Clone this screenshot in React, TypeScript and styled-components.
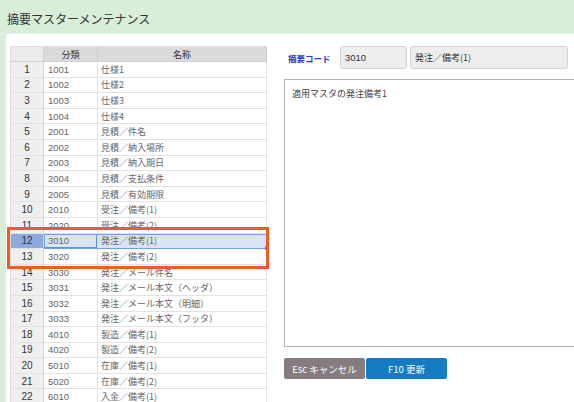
import styled, { createGlobalStyle } from "styled-components";

const GlobalStyle = createGlobalStyle`
    html, body {
        margin: 0;
        padding: 0;
        background: #d9eed9;
        font-family: "Noto Sans CJK JP", "Noto Sans", sans-serif;
        color: #333;
    }
`;

const rows: [number, string, string][] = [
    [1, "1001", "仕様1"],
    [2, "1002", "仕様2"],
    [3, "1003", "仕様3"],
    [4, "1004", "仕様4"],
    [5, "2001", "見積／件名"],
    [6, "2002", "見積／納入場所"],
    [7, "2003", "見積／納入期日"],
    [8, "2004", "見積／支払条件"],
    [9, "2005", "見積／有効期限"],
    [10, "2010", "受注／備考(1)"],
    [11, "2020", "受注／備考(2)"],
    [12, "3010", "発注／備考(1)"],
    [13, "3020", "発注／備考(2)"],
    [14, "3030", "発注／メール件名"],
    [15, "3031", "発注／メール本文（ヘッダ）"],
    [16, "3032", "発注／メール本文（明細）"],
    [17, "3033", "発注／メール本文（フッタ）"],
    [18, "4010", "製造／備考(1)"],
    [19, "4020", "製造／備考(2)"],
    [20, "5010", "在庫／備考(1)"],
    [21, "5020", "在庫／備考(2)"],
    [22, "6010", "入金／備考(1)"],
];

const selectedNo = 12;

const App = () => {
    return (
        <Page>
            <GlobalStyle />
            <Header>摘要マスターメンテナンス</Header>
            <Panel>
                <GridWrap>
                    <HeadRow>
                        <NoHead />
                        <CodeHead>分類</CodeHead>
                        <NameHead>名称</NameHead>
                    </HeadRow>
                    {rows.map(([no, code, name]) => {
                        const selected = no === selectedNo;
                        return (
                            <Row key={no} $selected={selected}>
                                <NoCell $selected={selected}>{no}</NoCell>
                                <CodeCell $selected={selected} $active={selected}>
                                    {code}
                                </CodeCell>
                                <NameCell $selected={selected}>
                                    {name}
                                    {selected && <FillHandle />}
                                </NameCell>
                            </Row>
                        );
                    })}
                    <Callout />
                </GridWrap>
                <Form>
                    <CodeLine>
                        <FieldLabel>摘要コード</FieldLabel>
                        <CodeInput>3010</CodeInput>
                        <NameInput>発注／備考(1)</NameInput>
                    </CodeLine>
                    <Memo>適用マスタの発注備考1</Memo>
                    <Buttons>
                        <Button $tone="cancel">Esc キャンセル</Button>
                        <Button $tone="save">F10 更新</Button>
                    </Buttons>
                </Form>
            </Panel>
        </Page>
    );
};

export default App;

const Page = styled.div`
    width: 574px;
    height: 402px;
    overflow: hidden;
    display: flex;
    flex-direction: column;
`;

const Header = styled.header`
    height: 34px;
    flex: none;
    box-sizing: border-box;
    padding: 10px 0 0 7px;
    font-size: 12px;
    line-height: 18px;
    color: #333;
    border-bottom: 1px solid #e6f2e4;
`;

const Panel = styled.main`
    flex: 1;
    margin-left: 6px;
    background: #fff;
    display: flex;
    padding: 12px 0 0 4px;
    box-sizing: border-box;
    overflow: hidden;
`;

const GridWrap = styled.div`
    position: relative;
    width: 256px;
    flex: none;
    border-top: 1px solid #dedede;
    border-left: 1px solid #dedede;
    align-self: flex-start;
`;

const HeadRow = styled.div`
    display: flex;
    height: 15px;
    background: #dadada;
    font-size: 9px;
    color: #333;
`;

const HeadCell = styled.div`
    box-sizing: border-box;
    border-right: 1px solid #cfcfcf;
    border-bottom: 1px solid #cfcfcf;
    display: flex;
    align-items: center;
    justify-content: center;
`;

const NoHead = styled(HeadCell)`
    width: 33px;
    background: #ebebeb;
`;

const CodeHead = styled(HeadCell)`
    width: 54px;
`;

const NameHead = styled(HeadCell)`
    flex: 1;
`;

const Row = styled.div<{ $selected?: boolean }>`
    position: relative;
    display: flex;
    height: 15.6px;
    font-size: 9px;
    color: #666;

    ${(p) =>
        p.$selected &&
        `
        &::after {
            content: "";
            position: absolute;
            left: 33px;
            right: 0;
            top: 0;
            bottom: 0;
            border: 1px solid #6d9ff2;
            pointer-events: none;
        }
    `}
`;

const Cell = styled.div<{ $selected?: boolean; $active?: boolean }>`
    box-sizing: border-box;
    border-right: 1px solid #e2e2e2;
    border-bottom: 1px solid #e2e2e2;
    display: flex;
    align-items: center;
    white-space: nowrap;
    background: ${(p) => (p.$selected ? "#dbe4f6" : "#fff")};
`;

const NoCell = styled(Cell)`
    width: 33px;
    justify-content: center;
    font-family: "Liberation Sans", sans-serif;
    font-size: 10px;
    color: #333;
    background: ${(p) => (p.$selected ? "#8eaadc" : "#efefef")};
    border-right-color: #d6d6d6;
`;

const CodeCell = styled(Cell)`
    width: 54px;
    padding-left: 4px;
    font-family: "Liberation Sans", sans-serif;
    font-size: 9.5px;
    box-shadow: ${(p) => (p.$active ? "inset 0 0 0 1px #5b8ff0" : "none")};
`;

const NameCell = styled(Cell)`
    position: relative;
    flex: 1;
    padding-left: 3px;
`;

const FillHandle = styled.span`
    position: absolute;
    right: -3px;
    bottom: -2px;
    width: 4px;
    height: 4px;
    background: #4a86f0;
    z-index: 2;
`;

const Callout = styled.div`
    position: absolute;
    left: -4px;
    top: 180px;
    width: 262px;
    height: 42px;
    box-sizing: border-box;
    border: 3px solid #f05a28;
    pointer-events: none;
    z-index: 3;
`;

const Form = styled.section`
    margin-left: 17px;
    width: 310px;
    flex: none;
    display: flex;
    flex-direction: column;
`;

const CodeLine = styled.div`
    display: flex;
    align-items: center;
    gap: 3px;
    height: 23px;
`;

const FieldLabel = styled.label`
    width: 53px;
    box-sizing: border-box;
    padding-left: 4px;
    font-size: 8.5px;
    font-weight: bold;
    color: #3535c8;
`;

const InputBox = styled.div`
    height: 23px;
    box-sizing: border-box;
    background: #eeeeee;
    border: 1px solid #d2d2d2;
    border-radius: 3px;
    display: flex;
    align-items: center;
    padding-left: 4px;
    font-size: 9px;
    color: #333;
`;

const CodeInput = styled(InputBox)`
    width: 67px;
    font-family: "Liberation Sans", sans-serif;
    font-size: 9.5px;
`;

const NameInput = styled(InputBox)`
    width: 158px;
`;

const Memo = styled.div`
    margin-top: 10px;
    height: 268px;
    box-sizing: border-box;
    border: 1px solid #b4b4b4;
    padding: 7px 7px;
    font-size: 9px;
    color: #444;
`;

const Buttons = styled.div`
    display: flex;
    gap: 1px;
    margin-top: 11px;
`;

const Button = styled.button<{ $tone: "cancel" | "save" }>`
    width: 81px;
    height: 21px;
    border: none;
    border-radius: 2px;
    padding: 0;
    font-family: "Noto Sans CJK JP", "Noto Sans", sans-serif;
    font-size: 9.5px;
    color: #fff;
    background: ${(p) => (p.$tone === "cancel" ? "#857c81" : "#157cc4")};
    cursor: pointer;
`;
